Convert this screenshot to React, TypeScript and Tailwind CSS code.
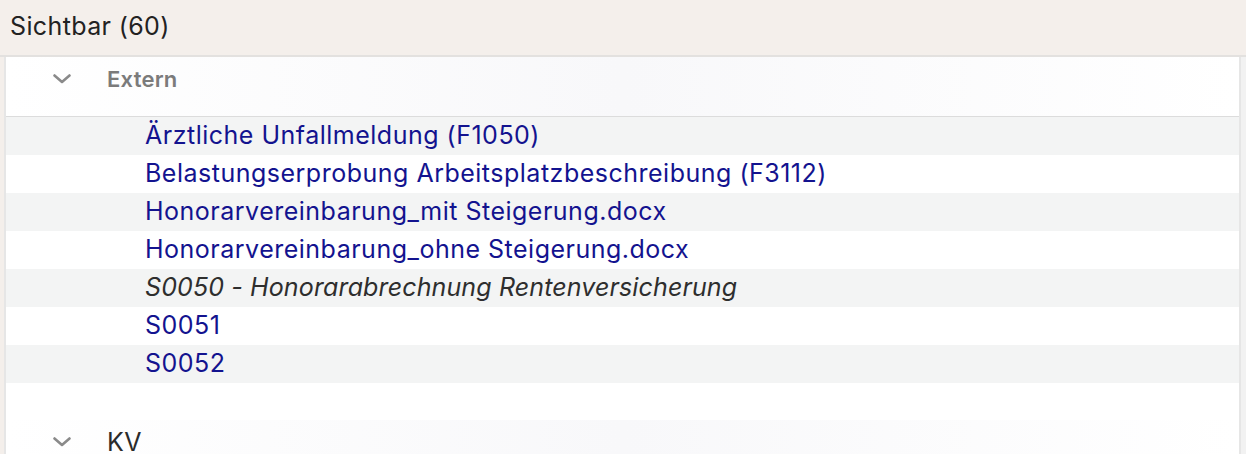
type Doc = { label: string; italic?: boolean };

const EXTERN: Doc[] = [
  { label: "Ärztliche Unfallmeldung (F1050)" },
  { label: "Belastungserprobung Arbeitsplatzbeschreibung (F3112)" },
  { label: "Honorarvereinbarung_mit Steigerung.docx" },
  { label: "Honorarvereinbarung_ohne Steigerung.docx" },
  { label: "S0050 - Honorarabrechnung Rentenversicherung", italic: true },
  { label: "S0051" },
  { label: "S0052" },
];

function Chevron() {
  return (
    <svg width="18" height="10" viewBox="0 0 18 10" className="shrink-0">
      <polyline
        points="1.5,1.5 9,8 16.5,1.5"
        fill="none"
        stroke="#8a8a8a"
        strokeWidth="2.6"
        strokeLinecap="round"
        strokeLinejoin="round"
      />
    </svg>
  );
}

function GroupHeader({ label, muted }: { label: string; muted?: boolean }) {
  return (
    <div className="flex items-center h-[59px] pb-[15px] bg-gradient-to-r from-white via-[#f8f8fa] to-white">
      <div className="w-[47px] shrink-0" />
      <Chevron />
      <div className="w-[36px] shrink-0" />
      <span
        className={
          muted
            ? "text-[22px] leading-[24px] font-semibold text-[#7b7b7b] tracking-[0.01em]"
            : "text-[25px] leading-[24px] text-[#2b2b2b] tracking-[0.02em]"
        }
      >
        {label}
      </span>
    </div>
  );
}

export default function App() {
  return (
    <div className="w-[1246px] h-[454px] overflow-hidden bg-[#f4efeb] font-['Inter',sans-serif]">
      <div className="h-[55px] flex items-center px-[10px] pb-[2px] text-[25px] tracking-[0.015em] text-[#222]">
        Sichtbar (60)
      </div>
      <div className="flex h-[399px] border-t-2 border-[#e3e1df]">
        <div className="w-[4px]" />
        <div className="flex-1 bg-white border-l-2 border-r-2 border-[#e6e6e6]">
          <GroupHeader label="Extern" muted />
          <div className="border-t border-[#dcdcdc]">
            {EXTERN.map((d, i) => (
              <div
                key={d.label}
                className={
                  "h-[38px] flex items-center pl-[139px] text-[25px] " +
                  (i % 2 === 0 ? "bg-[#f3f4f4] " : "bg-white ") +
                  (d.italic
                    ? "italic text-[#2e2e2e] tracking-[0.005em]"
                    : "text-[#13138f] tracking-[0.02em]")
                }
              >
                {d.label}
              </div>
            ))}
          </div>
          <div className="h-[37px]" />
          <GroupHeader label="KV" />
        </div>
        <div className="w-[5px] bg-[#f2f2f2]" />
      </div>
    </div>
  );
}
